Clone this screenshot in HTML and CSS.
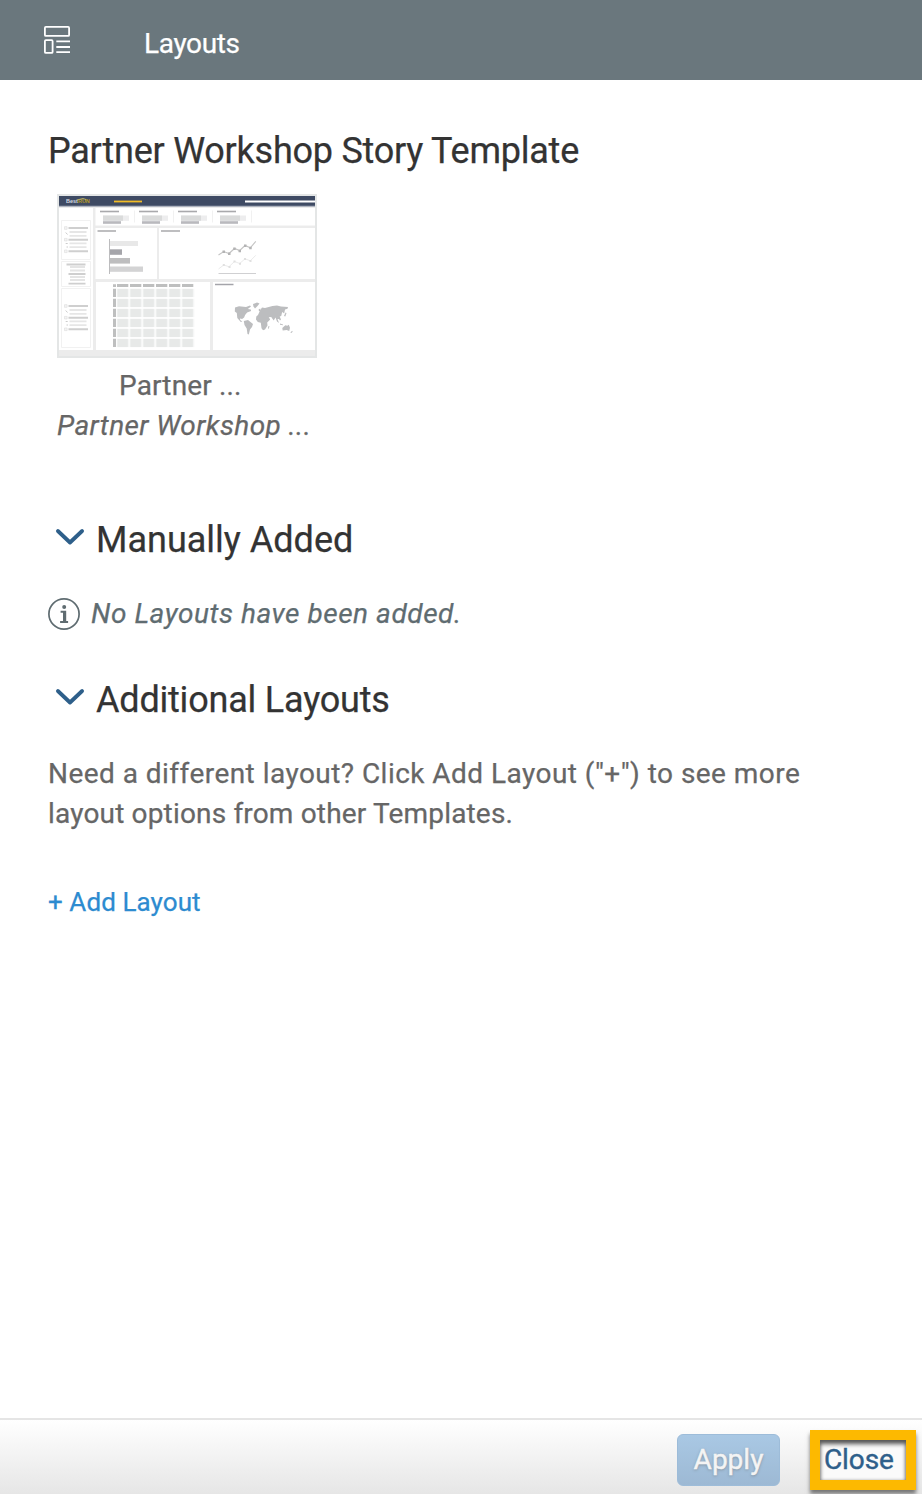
FILE: index.html
```html
<!DOCTYPE html>
<html lang="en">
<head>
<meta charset="utf-8">
<title>Layouts</title>
<link rel="stylesheet" href="styles.css">
</head>
<body>
<div class="panel">
  <header class="bar">
    <svg class="bar-icon" width="28" height="30" viewBox="0 0 28 30" fill="none" stroke="#fff" stroke-width="1.800">
      <rect x="1.900" y="1.900" width="24.200" height="9" rx="1"/>
      <rect x="1.900" y="15.200" width="7.700" height="12.700" rx="1"/>
      <path d="M13.300 16.300H27M13.300 22H27M13.300 27.200H27"/>
    </svg>
    <h1 class="bar-title">Layouts</h1>
  </header>
  <main class="content">
    <h2 class="heading heading-template">Partner Workshop Story Template</h2>
    <figure class="card">
      <svg class="thumb" width="260" height="164" viewBox="57 194 260 164">
        <defs>
          <g id="kpi">
            <path d="M0 0h19" stroke="#a9a9ac" stroke-width="1.6"/>
            <rect x="3" y="4" width="26" height="5.3" fill="#ededee"/>
            <rect x="3" y="4" width="20" height="5.3" fill="#dadbdb"/>
            <rect x="3" y="9.7" width="18" height="2.6" fill="#b9b9bd"/>
          </g>
          <g id="filter">
            <path d="M4 0h19.500M4 11.700h19.500M4 23.300h19.500" stroke="#cfcfcf" stroke-width="1.900"/>
            <path d="M5 4h17M5 7.800h17M5 15.300h17M5 19.200h17" stroke="#e6e6e6" stroke-width="1.800"/>
            <path d="M0-1.300h2.600v2.600H0zM0 10.400h2.600V13H0zM0 22h2.600v2.600H0z" fill="#f4f4f4" stroke="#dcdcdc" stroke-width=".6"/>
            <path d="M1.200 4.500l1.800 2M1.200 15.500h2M2 19h1.500" stroke="#ccc"/>
          </g>
          <pattern id="cells" x="116.500" y="288" width="13" height="10" patternUnits="userSpaceOnUse">
            <rect x=".5" y=".8" width="11.300" height="8.300" fill="#e7e9e8"/>
          </pattern>
        </defs>
        <rect x="57" y="194" width="260" height="164" fill="#e4e6e6"/>
        <rect x="59" y="196" width="256" height="160" fill="#ececec"/>
        <rect x="59" y="196" width="256" height="10" fill="#3e4a63"/>
        <path d="M59 206h256" stroke="#737d92"/>
        <text class="logo" x="66" y="203">Best<tspan fill="#b69b28">RUN</tspan></text>
        <path d="M77 200l6-1.500 3 1" stroke="#b7ad68" fill="none"/>
        <path d="M114 201.500h28" stroke="#f1bc27" stroke-width="1.800"/>
        <path d="M245 201.500h70" stroke="#fff" stroke-width="1.800"/>
        <g fill="#fff">
          <rect x="59" y="208" width="34" height="142"/>
          <rect x="95.500" y="208" width="219.500" height="17.500"/>
          <rect x="95.500" y="228" width="61.500" height="51"/>
          <rect x="159" y="228" width="156" height="51"/>
          <rect x="96" y="282" width="114" height="68"/>
          <rect x="213" y="282" width="102" height="68"/>
        </g>
        <g fill="none" stroke="#f1f1f1">
          <path d="M61.500 220.500h29v39h-29zM61.500 261.500h29v25h-29zM61.500 288.500h29v59h-29z"/>
          <path d="M134.500 210.500v12M173.500 210.500v12M212.500 210.500v12M251.500 210.500v12"/>
        </g>
        <use href="#kpi" x="100" y="211.500"/>
        <use href="#kpi" x="139" y="211.500"/>
        <use href="#kpi" x="178" y="211.500"/>
        <use href="#kpi" x="217" y="211.500"/>
        <use href="#filter" x="64.500" y="228"/>
        <use href="#filter" x="64.500" y="306"/>
        <g stroke="#e4e4e4" stroke-width="1.800">
          <path d="M70 267h15M70 270.500h15M70 277h15M70 280h15"/>
          <path d="M66.500 264.500h19M68.500 274h17M68.500 283.700h17" stroke="#cfcfcf"/>
        </g>
        <path d="M97.500 231h18.500M161 231h19" stroke="#a9a9ac" stroke-width="1.600"/>
        <path d="M109.500 239v35" stroke="#bcbcbe"/>
        <rect x="110" y="241" width="28" height="5" fill="#e8e8e8"/>
        <rect x="110" y="249.300" width="12" height="5.500" fill="#a5a5aa"/>
        <rect x="110" y="258" width="20" height="5.600" fill="#bebebf"/>
        <rect x="110" y="266.500" width="33" height="5.300" fill="#d3d3d4"/>
        <g fill="none">
          <path d="M218.500 255l5.200-3.500 5.300 2 5.500-5 5.200 2 5.300-5 5.300 2.300 5.500-6.500" stroke="#c4c4c4" stroke-width="1.100"/>
          <path d="M218.500 269l5.200-4 5.300 1.700 5.500-5.200 5.200 2 5.300-4.700 5.300 2 5.500-5.500" stroke="#ebebeb"/>
          <path d="M218.500 273.500H256" stroke="#d0d0d2"/>
        </g>
        <path d="M222.500 250.500h2.500v2.500h-2.500zM228 252.500h2.500v2.500H228zM233.200 247.500h2.500v2.500h-2.500zM238.500 249.800h2.500v2.500h-2.500zM244 244.500h2.500v2.500H244zM249.200 246.800h2.500v2.500h-2.500z" fill="#b3b3b4"/>
        <path d="M222.800 264h2v2h-2zM228.500 266h2v2h-2zM233.500 260.500h2v2h-2zM239 262.700h2v2h-2zM244 258h2v2h-2zM249.500 260h2v2h-2z" fill="#e0e0e0"/>
        <rect x="116.500" y="288" width="78" height="60" fill="url(#cells)"/>
        <path d="M117 285.500h76.500" stroke="#bebfbf" stroke-width="2.800" stroke-dasharray="11.300 1.700"/>
        <path d="M114.500 284.200v63" stroke="#bebfbf" stroke-width="3" stroke-dasharray="2.700 1.900 8.300 1.700 8.300 1.700 8.300 1.700 8.300 1.700 8.300 1.700 8.300 9"/>
        <path d="M215 284.500h18.500" stroke="#a4a4aa" stroke-width="1.500"/>
        <g fill="#bcbdbf">
          <path d="M235 307.500l4-1.200 7 .6 4-1.500 1 1.200-3.200 2.500 3 .5.300 1.500-4 1.500-2 2.500-1 2.500-2 1.500-2-.7 0 1.500 2.200 1.700-1.500.5-3.500-4-.5-5-2-1.700z"/>
          <path d="M253 304l4-1.500 2.500 1-2 2.500-2.500 2.500-1.500-2z"/>
          <path d="M243.800 321l4.200-1 5 4-1 3-2 2.500-1.200 5-1.300-.5-.8-5.500-2.200-3.500z"/>
          <path d="M258 315l2-4.500 2-3 3 .5 7.500-2 4.500-.5 4 1 7 .5-.5 1.800-2.500.7-.8 4-2-1.500-1 4-1.500.5 1.300 3-1 1-1-1.500-1.500 0 1.500 4-2-1.500-1.500-4-1.800 3-2.500-3.500-2.500.3 1.500 2.200-3 3 .3 3-2.500 4-2 .7-1.500-2-.7-5.500-3-.7-1.800-2.500.3-3z"/>
          <path d="M282.300 328l3-2.700 2 .5 1.500-1 1.200 3-.8 3.200-2.500-1-4 .5zM280 323.500l3 1v.8l-3-.5zM286.500 313l-1.200 3.500-1.300-.6 1.600-3.400zM268.500 326l1 .3-.8 2.500-.8-.4zM290.500 332.500l1.600-1.800.6 1-1.700 1.500zM258.600 309.500l1.700-1 .2 2.200-1.500.6z"/>
        </g>
      </svg>
      <figcaption class="caption">
        <span class="caption-name">Partner ...</span>
        <span class="caption-template">Partner Workshop ...</span>
      </figcaption>
    </figure>
    <section class="section section-manual">
      <h2 class="heading group">
        <svg class="chevron" width="30" height="20" viewBox="0 0 30 20" fill="none" stroke="#2e5f8a" stroke-width="3.800" stroke-linecap="round" stroke-linejoin="round"><path d="M2.900 3L15 14.500 27.100 3"/></svg>
        <span class="manual-title">Manually Added</span>
      </h2>
      <p class="notice">
        <svg width="32" height="32" viewBox="0 0 32 32" fill="none" stroke="#5f6c71"><circle cx="16" cy="16" r="15.100" stroke-width="1.700"/><path d="M12.600 13.800h4.600v9.700M12.100 24h8" stroke-width="2"/><path d="M16.500 13v10" stroke-width="3"/><circle cx="16.200" cy="9" r="2" fill="#5f6c71" stroke="none"/></svg>
        <em class="notice-text">No Layouts have been added.</em>
      </p>
    </section>
    <section class="section section-additional">
      <h2 class="heading group">
        <svg class="chevron" width="30" height="20" viewBox="0 0 30 20" fill="none" stroke="#2e5f8a" stroke-width="3.800" stroke-linecap="round" stroke-linejoin="round"><path d="M2.900 3L15 14.500 27.100 3"/></svg>
        <span class="additional-title">Additional Layouts</span>
      </h2>
      <p class="help"><span class="help-first">Need a different layout? Click Add Layout ("+") to see more</span><br><span class="help-second">layout options from other Templates.</span></p>
      <a class="add">+ Add Layout</a>
    </section>
  </main>
  <footer class="footer">
    <button class="apply" disabled>Apply</button>
    <button class="close">Close</button>
  </footer>
</div>
</body>
</html>
```
FILE: styles.css
```css
* { box-sizing: border-box; }
body { margin: 0; background: #fff; font: 28px/40px Roboto, "Noto Sans", sans-serif; color: #666; -webkit-text-stroke: 0.25px currentColor; }
h1, h2, p, figure { margin: 0; font-weight: 400; }
svg { display: block; flex: none; }
.panel { display: flex; flex-direction: column; width: 922px; height: 1494px; overflow: hidden; }
.bar { display: flex; flex: none; height: 80px; padding: 24px 0 0 43px; background: #6a777d; color: #fff; }
.bar-icon { margin-top: 1px; }
.bar-title { margin-left: 73px; font-size: 28px; letter-spacing: -0.35px; }
.content { flex: 1; padding: 51px 48px 0; }
.heading { font-size: 36px; line-height: 40px; color: #333; white-space: nowrap; }
.heading-template { letter-spacing: -0.24px; }
.card { width: 260px; margin: 23px 0 0 9px; }
.logo { font: 700 5.500px "Liberation Sans", sans-serif; fill: #d5d9e0; -webkit-text-stroke: 0; }
.caption { display: flex; flex-direction: column; padding-top: 8px; white-space: nowrap; }
.caption-name { padding-left: 62px; letter-spacing: 0.15px; }
.caption-template { height: 32px; overflow: hidden; font-style: italic; letter-spacing: 0.4px; }
.section-manual { margin-top: 82px; }
.section-additional { margin-top: 46px; }
.group { display: flex; padding-left: 7px; }
.chevron { margin: 8px 11px 0 0; }
.additional-title { letter-spacing: -0.2px; }
.notice { display: flex; align-items: center; gap: 11px; height: 40px; margin-top: 34px; color: #5f6c71; white-space: nowrap; }
.notice-text { letter-spacing: 0.55px; }
.help { margin-top: 34px; white-space: nowrap; }
.help-first { letter-spacing: 0.46px; }
.help-second { letter-spacing: 0.17px; }
.add { display: block; margin-top: 48px; font-size: 26px; letter-spacing: 0.08px; color: #2d8bd0; }
.footer { display: flex; flex: none; height: 76px; padding: 10px 6px 0 0; justify-content: flex-end; border-top: 2px solid #e5e5e5; background: linear-gradient(#fff, #e6e6e6); }
.apply, .close { padding: 0; font: 28px/40px Roboto, "Noto Sans", sans-serif; -webkit-text-stroke: 0.4px currentColor; }
.apply { width: 103px; height: 52px; margin: 4px 30px 0 0; border: 1px solid #9dbcd9; border-radius: 6px; background: linear-gradient(#a9c8e4, #9db9d4); color: #f4f4f4; text-shadow: 0 1px 3px #7f8c98; }
.close { width: 106px; height: 60px; border: 10px solid #fdb900; background: #fafafa; color: #2e5f8a; box-shadow: 0 4px 4px #777, inset 0 4px 4px #555, inset 0 0 3px #aaa; text-align: left; padding-left: 4px; letter-spacing: -0.1px; }
```
